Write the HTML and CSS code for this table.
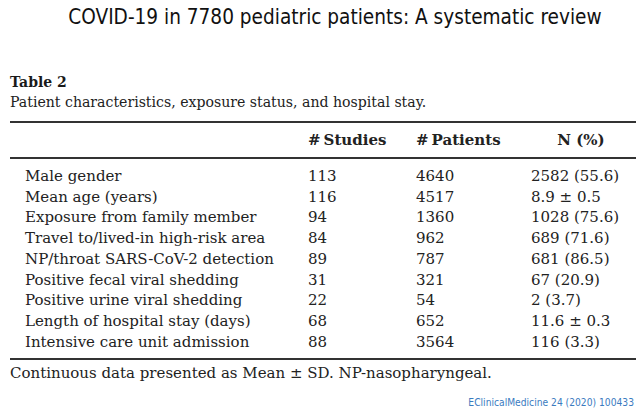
FILE: index.html
```html
<!DOCTYPE html>
<html lang="en">
<head>
<meta charset="utf-8">
<title>COVID-19 in 7780 pediatric patients</title>
<link rel="stylesheet" href="styles.css">
</head>
<body>
<div class="page">
  <h1 class="title">COVID-19 in 7780 pediatric patients: A systematic review</h1>
  <div class="table-label">Table 2</div>
  <div class="caption">Patient characteristics, exposure status, and hospital stay.</div>
  <table class="data">
    <thead>
      <tr>
        <th class="c-label"></th>
        <th class="c-num">#&#8201;Studies</th>
        <th class="c-num">#&#8201;Patients</th>
        <th class="c-n">N (%)</th>
      </tr>
    </thead>
    <tbody>
      <tr class="first"><td class="c-label">Male gender</td><td>113</td><td>4640</td><td>2582 (55.6)</td></tr>
      <tr><td class="c-label">Mean age (years)</td><td>116</td><td>4517</td><td>8.9 ± 0.5</td></tr>
      <tr><td class="c-label">Exposure from family member</td><td>94</td><td>1360</td><td>1028 (75.6)</td></tr>
      <tr><td class="c-label">Travel to/lived-in high-risk area</td><td>84</td><td>962</td><td>689 (71.6)</td></tr>
      <tr><td class="c-label">NP/throat SARS-CoV-2 detection</td><td>89</td><td>787</td><td>681 (86.5)</td></tr>
      <tr><td class="c-label">Positive fecal viral shedding</td><td>31</td><td>321</td><td>67 (20.9)</td></tr>
      <tr><td class="c-label">Positive urine viral shedding</td><td>22</td><td>54</td><td>2 (3.7)</td></tr>
      <tr><td class="c-label">Length of hospital stay (days)</td><td>68</td><td>652</td><td>11.6 ± 0.3</td></tr>
      <tr class="last"><td class="c-label">Intensive care unit admission</td><td>88</td><td>3564</td><td>116 (3.3)</td></tr>
    </tbody>
  </table>
  <p class="footnote">Continuous data presented as Mean ± SD. NP-nasopharyngeal.</p>
  <div class="journal">EClinicalMedicine 24 (2020) 100433</div>
</div>
</body>
</html>
```

FILE: styles.css
```css
html, body {
  margin: 0;
  padding: 0;
  background: #ffffff;
}

.page {
  padding: 0 5px 0 10px;
  font-family: "DejaVu Serif", "Liberation Serif", serif;
  color: #222222;
}

.title {
  margin: 0;
  padding: 4px 0 0 24px;
  text-align: center;
  font-family: "DejaVu Sans Condensed", "DejaVu Sans", sans-serif;
  font-stretch: condensed;
  font-weight: normal;
  font-size: 20.6px;
  line-height: 26px;
  color: #111111;
}

.table-label {
  margin-top: 42px;
  font-weight: bold;
  font-size: 14px;
  line-height: 20px;
  color: #1a1a1a;
}

.caption {
  font-size: 14.1px;
  line-height: 20px;
}

.data {
  width: 100%;
  margin-top: 9px;
  border-collapse: collapse;
  font-size: 15px;
  line-height: 20.75px;
}

.data thead tr {
  border-top: 2px solid #333333;
  border-bottom: 2px solid #333333;
}

.data tbody {
  border-bottom: 2px solid #333333;
}

.data th {
  font-weight: bold;
  text-align: left;
  padding: 7px 0 6px 0;
  white-space: nowrap;
}

.data td {
  padding: 0;
  white-space: nowrap;
}

.data .c-label {
  width: 283px;
  padding-left: 15px;
}

.data th.c-num:nth-child(2) { width: 108px; }
.data th.c-num:nth-child(3) { width: 115px; }

.data th.c-n {
  text-align: center;
  padding-right: 5px;
}

.data tr.first td { padding-top: 7px; }
.data tr.last td { padding-bottom: 5px; }

.footnote {
  margin: 3px 0 0 0;
  font-size: 15px;
  line-height: 20px;
}

.journal {
  margin-top: 13px;
  text-align: right;
  padding-right: 2px;
  font-family: "DejaVu Sans Condensed", "DejaVu Sans", sans-serif;
  font-stretch: condensed;
  font-size: 10.2px;
  line-height: 13px;
  color: #3a7bbf;
}
```
